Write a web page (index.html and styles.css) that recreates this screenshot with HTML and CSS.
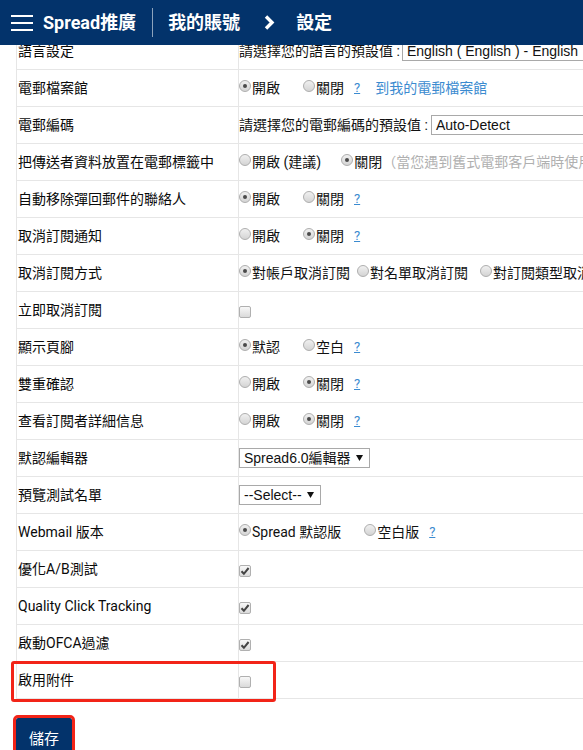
FILE: index.html
```html
<!DOCTYPE html>
<html lang="zh-Hant">
<head>
<meta charset="utf-8">
<title>設定</title>
<link rel="stylesheet" href="styles.css">
</head>
<body>
<header class="topbar">
  <svg class="menu-icon" width="22" height="16" viewBox="0 0 22 16"><path d="M0 1h22M0 8h22M0 15h22" stroke="#fff" stroke-width="2"/></svg>
  <span class="brand"><span class="latin">Spread</span>推廣</span>
  <span class="divider"></span>
  <span class="crumb">我的賬號</span>
  <svg class="chevron" width="11" height="15" viewBox="0 0 11 15"><path d="M2 1.5l6 6-6 6" fill="none" stroke="#fff" stroke-width="3.4"/></svg>
  <span class="crumb">設定</span>
</header>

<main class="page">
  <div class="settings">
    <div class="row">
      <div class="label">語言設定</div>
      <div class="value">請選擇您的語言的預設值 : <span class="select select-wide">English ( English ) - English</span></div>
    </div>
    <div class="row">
      <div class="label">電郵檔案館</div>
      <div class="value"><span class="opt"><span class="radio on"></span>開啟</span><span class="opt opt-tight"><span class="radio"></span>關閉</span><a class="help">?</a><a class="link">到我的電郵檔案館</a></div>
    </div>
    <div class="row">
      <div class="label">電郵編碼</div>
      <div class="value">請選擇您的電郵編碼的預設值 : <span class="select select-wide select-enc">Auto-Detect</span></div>
    </div>
    <div class="row">
      <div class="label">把傳送者資料放置在電郵標籤中</div>
      <div class="value"><span class="opt opt-mid"><span class="radio"></span>開啟 (建議)</span><span class="opt opt-none"><span class="radio on"></span>關閉</span><span class="note">（當您遇到舊式電郵客戶端時使用此選項）</span></div>
    </div>
    <div class="row">
      <div class="label">自動移除彈回郵件的聯絡人</div>
      <div class="value"><span class="opt"><span class="radio on"></span>開啟</span><span class="opt opt-tight"><span class="radio"></span>關閉</span><a class="help">?</a></div>
    </div>
    <div class="row">
      <div class="label">取消訂閱通知</div>
      <div class="value"><span class="opt"><span class="radio"></span>開啟</span><span class="opt opt-tight"><span class="radio on"></span>關閉</span><a class="help">?</a></div>
    </div>
    <div class="row">
      <div class="label">取消訂閱方式</div>
      <div class="value"><span class="opt opt-small"><span class="radio on"></span>對帳戶取消訂閱</span><span class="opt opt-small2"><span class="radio"></span>對名單取消訂閱</span><span class="opt"><span class="radio"></span>對訂閱類型取消訂閱</span></div>
    </div>
    <div class="row">
      <div class="label">立即取消訂閱</div>
      <div class="value"><span class="cb"></span></div>
    </div>
    <div class="row">
      <div class="label">顯示頁腳</div>
      <div class="value"><span class="opt"><span class="radio on"></span>默認</span><span class="opt opt-tight"><span class="radio"></span>空白</span><a class="help">?</a></div>
    </div>
    <div class="row">
      <div class="label">雙重確認</div>
      <div class="value"><span class="opt"><span class="radio"></span>開啟</span><span class="opt opt-tight"><span class="radio on"></span>關閉</span><a class="help">?</a></div>
    </div>
    <div class="row">
      <div class="label">查看訂閱者詳細信息</div>
      <div class="value"><span class="opt"><span class="radio"></span>開啟</span><span class="opt opt-tight"><span class="radio on"></span>關閉</span><a class="help">?</a></div>
    </div>
    <div class="row">
      <div class="label">默認編輯器</div>
      <div class="value"><span class="select">Spread6.0編輯器<svg class="caret" width="7" height="6" viewBox="0 0 7 6"><path d="M0 0h7L3.5 6z" fill="#111"/></svg></span></div>
    </div>
    <div class="row">
      <div class="label">預覽測試名單</div>
      <div class="value"><span class="select">--Select--<svg class="caret" width="7" height="6" viewBox="0 0 7 6"><path d="M0 0h7L3.5 6z" fill="#111"/></svg></span></div>
    </div>
    <div class="row">
      <div class="label">Webmail 版本</div>
      <div class="value"><span class="opt"><span class="radio on"></span>Spread 默認版</span><span class="opt opt-tight"><span class="radio"></span>空白版</span><a class="help">?</a></div>
    </div>
    <div class="row">
      <div class="label">優化A/B測試</div>
      <div class="value"><span class="cb"><svg width="10" height="10" viewBox="0 0 10 10"><path d="M1.5 5.2l2.4 2.6L8.6 2" fill="none" stroke="#444" stroke-width="2"/></svg></span></div>
    </div>
    <div class="row">
      <div class="label">Quality Click Tracking</div>
      <div class="value"><span class="cb"><svg width="10" height="10" viewBox="0 0 10 10"><path d="M1.5 5.2l2.4 2.6L8.6 2" fill="none" stroke="#444" stroke-width="2"/></svg></span></div>
    </div>
    <div class="row">
      <div class="label">啟動OFCA過濾</div>
      <div class="value"><span class="cb"><svg width="10" height="10" viewBox="0 0 10 10"><path d="M1.5 5.2l2.4 2.6L8.6 2" fill="none" stroke="#444" stroke-width="2"/></svg></span></div>
    </div>
    <div class="row row-marked">
      <div class="label">啟用附件</div>
      <div class="value"><span class="cb"></span></div>
      <span class="mark-box"></span>
    </div>
  </div>
  <button class="save" type="button">儲存</button>
</main>
</body>
</html>
```

FILE: styles.css
```css
html, body {
  margin: 0;
  padding: 0;
  overflow: hidden;
  background: #fff;
}

body {
  font-family: Roboto, "Noto Sans CJK TC", sans-serif;
  font-size: 14px;
  line-height: 20px;
  color: #111;
}

.topbar {
  position: fixed;
  top: 0;
  left: 0;
  right: 0;
  height: 45px;
  background: #03336b;
  display: flex;
  align-items: center;
  padding-left: 11px;
  color: #fff;
  font-family: Roboto, "Noto Sans CJK TC", sans-serif;
  font-weight: 700;
  font-size: 18px;
  z-index: 10;
}

.menu-icon {
  flex: none;
  margin-right: 10px;
}

.brand {
  white-space: nowrap;
}

.divider {
  width: 1px;
  height: 29px;
  background: rgba(255, 255, 255, 0.55);
  margin: 0 15px 0 16px;
}

.chevron {
  flex: none;
  margin: 0 21px 0 24px;
}

.crumb {
  white-space: nowrap;
}

.page {
  padding-top: 32px;
}

.settings {
  margin-left: 16px;
  width: 820px;
  border-left: 1px solid #e6e6e6;
  border-bottom: 1px solid #e6e6e6;
}

.row {
  display: grid;
  grid-template-columns: 221px 1fr;
  height: 36px;
  border-top: 1px solid #e6e6e6;
}

.label {
  display: flex;
  align-items: center;
  padding-left: 1px;
  white-space: nowrap;
  color: #0a0a0a;
}

.value {
  display: flex;
  align-items: center;
  border-left: 1px solid #e6e6e6;
  white-space: nowrap;
  overflow: hidden;
}

.opt {
  display: inline-flex;
  align-items: center;
  margin-right: 23px;
}

.opt-tight {
  margin-right: 10px;
}

.opt-mid {
  margin-right: 20px;
}

.opt-none {
  margin-right: 0;
}

.opt-small {
  margin-right: 7px;
}

.opt-small2 {
  margin-right: 12px;
}

.radio {
  display: inline-block;
  box-sizing: border-box;
  width: 12px;
  height: 12px;
  border: 1px solid #aeaeae;
  border-radius: 50%;
  background: linear-gradient(#f0f0f0, #d4d4d4);
  margin-right: 1px;
  margin-bottom: 5px;
  position: relative;
  flex: none;
}

.radio.on::after {
  content: "";
  position: absolute;
  left: 3px;
  top: 3px;
  width: 4px;
  height: 4px;
  border-radius: 50%;
  background: #4a4a4a;
}

.help {
  color: #3b8bd0;
  text-decoration: underline;
  margin-right: 15px;
  font-size: 13px;
}

.link {
  color: #3b8bd0;
}

.note {
  color: #b0b0b0;
}

.select {
  display: inline-flex;
  align-items: center;
  box-sizing: border-box;
  height: 20px;
  border: 1px solid #a9a9a9;
  background: #fff;
  padding: 0 6px 0 4px;
  font-family: "Liberation Sans", "Noto Sans CJK TC", sans-serif;
  font-size: 14px;
  color: #111;
}

.select-wide {
  width: 300px;
  margin-left: 2px;
}

.select-enc {
  margin-left: 3px;
}

.caret {
  margin-left: 5px;
  flex: none;
}

.cb {
  display: inline-flex;
  align-items: center;
  justify-content: center;
  box-sizing: border-box;
  width: 12px;
  height: 12px;
  border: 1px solid #b0b0b0;
  border-radius: 2px;
  background: linear-gradient(#f8f8f8, #dadada);
  margin-top: 3px;
}

.row-marked {
  position: relative;
}

.mark-box {
  position: absolute;
  top: -1px;
  left: -6px;
  width: 265px;
  height: 41px;
  box-sizing: border-box;
  border: 3px solid #f22418;
  border-radius: 3px;
  pointer-events: none;
}

.save {
  display: block;
  margin: 19px 0 0 16px;
  width: 56px;
  height: 38px;
  padding: 0;
  border: none;
  border-radius: 2px;
  background: #03336b;
  color: #fff;
  font-family: "Noto Sans CJK TC", sans-serif;
  font-size: 15px;
  outline: 3px solid #f22418;
}
```
